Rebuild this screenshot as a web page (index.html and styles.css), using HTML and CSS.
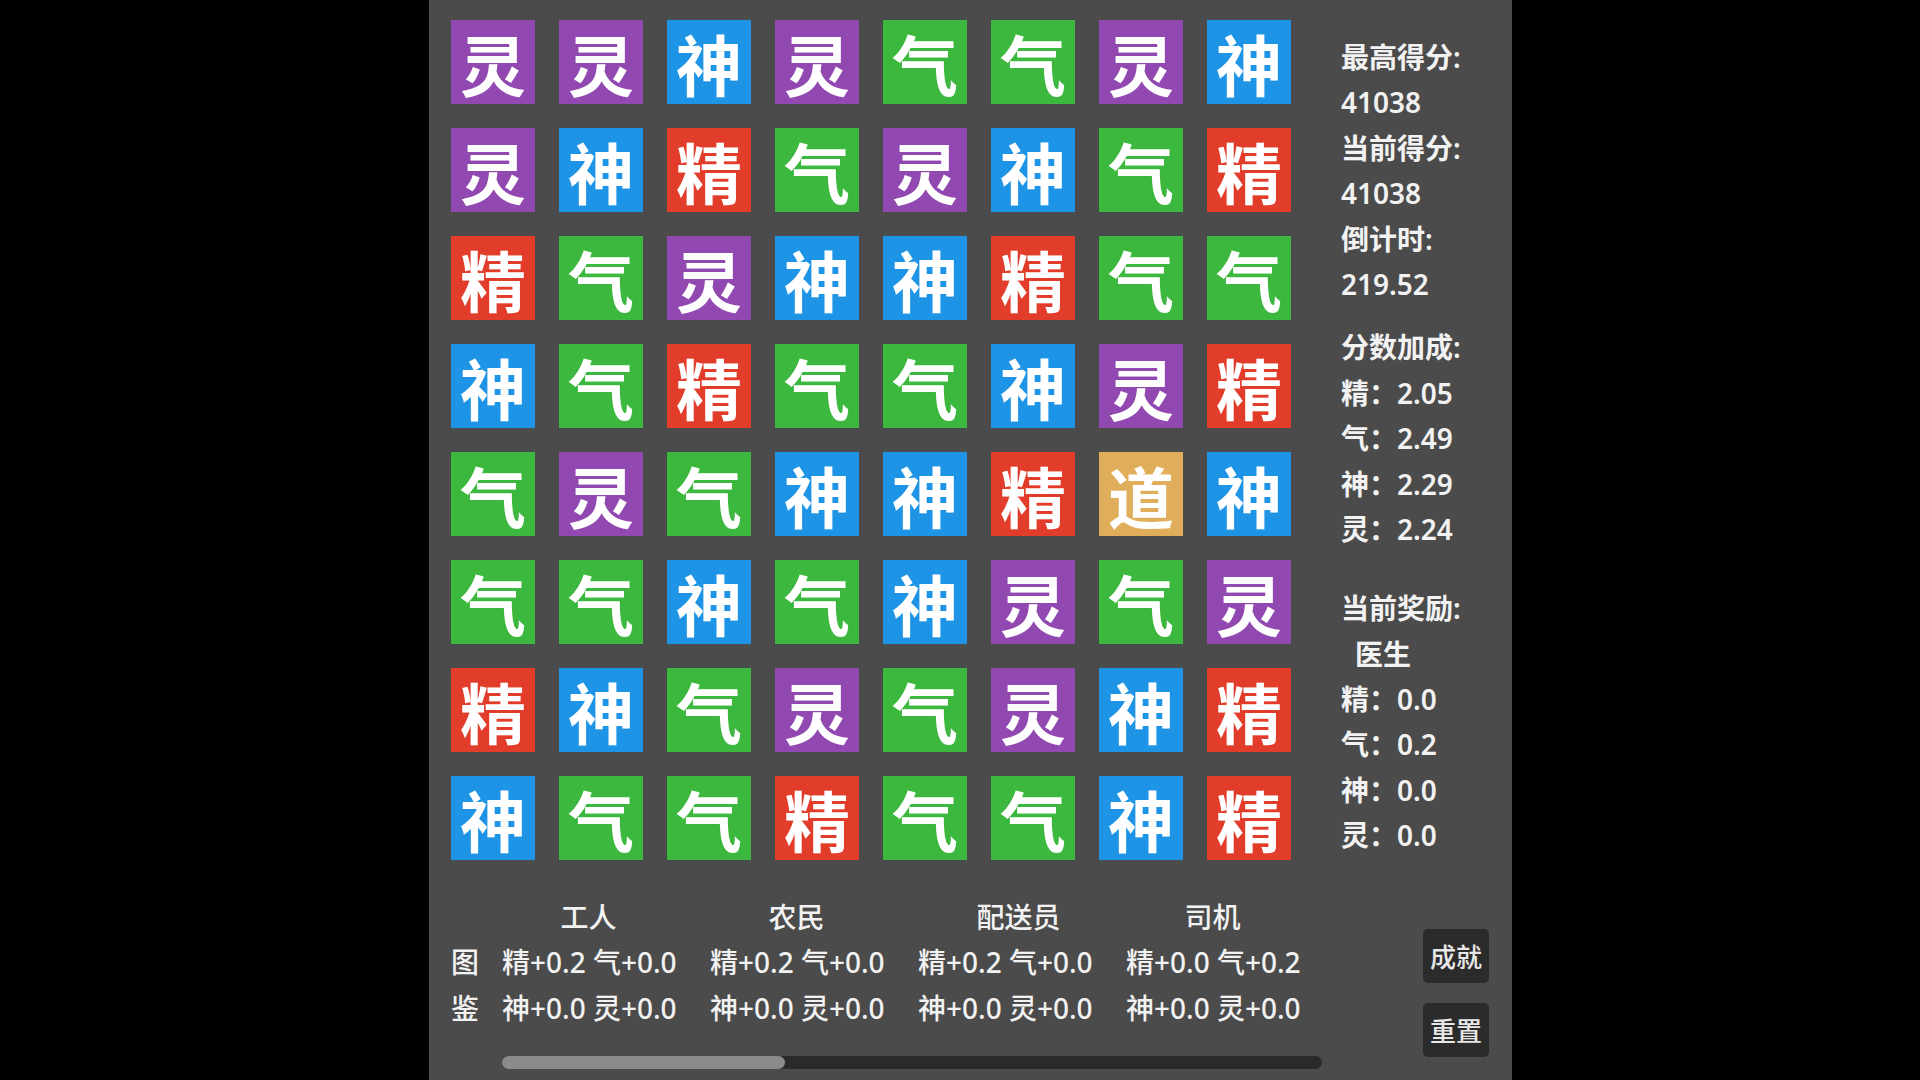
FILE: index.html
```html
<!DOCTYPE html>
<html lang="zh-CN">
<head>
<meta charset="utf-8">
<title>精气神灵</title>
<link rel="stylesheet" href="styles.css">
</head>
<body>
<div class="panel">
  <div class="top">
    <div class="board">
      <div class="tile ling">灵</div><div class="tile ling">灵</div><div class="tile shen">神</div><div class="tile ling">灵</div><div class="tile qi">气</div><div class="tile qi">气</div><div class="tile ling">灵</div><div class="tile shen">神</div>
      <div class="tile ling">灵</div><div class="tile shen">神</div><div class="tile jing">精</div><div class="tile qi">气</div><div class="tile ling">灵</div><div class="tile shen">神</div><div class="tile qi">气</div><div class="tile jing">精</div>
      <div class="tile jing">精</div><div class="tile qi">气</div><div class="tile ling">灵</div><div class="tile shen">神</div><div class="tile shen">神</div><div class="tile jing">精</div><div class="tile qi">气</div><div class="tile qi">气</div>
      <div class="tile shen">神</div><div class="tile qi">气</div><div class="tile jing">精</div><div class="tile qi">气</div><div class="tile qi">气</div><div class="tile shen">神</div><div class="tile ling">灵</div><div class="tile jing">精</div>
      <div class="tile qi">气</div><div class="tile ling">灵</div><div class="tile qi">气</div><div class="tile shen">神</div><div class="tile shen">神</div><div class="tile jing">精</div><div class="tile dao">道</div><div class="tile shen">神</div>
      <div class="tile qi">气</div><div class="tile qi">气</div><div class="tile shen">神</div><div class="tile qi">气</div><div class="tile shen">神</div><div class="tile ling">灵</div><div class="tile qi">气</div><div class="tile ling">灵</div>
      <div class="tile jing">精</div><div class="tile shen">神</div><div class="tile qi">气</div><div class="tile ling">灵</div><div class="tile qi">气</div><div class="tile ling">灵</div><div class="tile shen">神</div><div class="tile jing">精</div>
      <div class="tile shen">神</div><div class="tile qi">气</div><div class="tile qi">气</div><div class="tile jing">精</div><div class="tile qi">气</div><div class="tile qi">气</div><div class="tile shen">神</div><div class="tile jing">精</div>
    </div>
    <div class="side">
      <div class="group">
        <div class="line">最高得分:</div>
        <div class="line">41038</div>
        <div class="line">当前得分:</div>
        <div class="line">41038</div>
        <div class="line">倒计时:</div>
        <div class="line">219.52</div>
      </div>
      <div class="group g2">
        <div class="line">分数加成:</div>
        <div class="line">精：2.05</div>
        <div class="line">气：2.49</div>
        <div class="line">神：2.29</div>
        <div class="line">灵：2.24</div>
      </div>
      <div class="group g3">
        <div class="line">当前奖励:</div>
        <div class="line indent">医生</div>
        <div class="line">精：0.0</div>
        <div class="line">气：0.2</div>
        <div class="line">神：0.0</div>
        <div class="line">灵：0.0</div>
      </div>
    </div>
  </div>
  <div class="bottom">
    <div class="label">
      <div class="line">&nbsp;</div>
      <div class="line">图</div>
      <div class="line">鉴</div>
    </div>
    <div class="collection">
      <div class="cols">
        <div class="col">
          <div class="line">工人</div>
          <div class="line">精+0.2 气+0.0</div>
          <div class="line">神+0.0 灵+0.0</div>
        </div>
        <div class="col">
          <div class="line">农民</div>
          <div class="line">精+0.2 气+0.0</div>
          <div class="line">神+0.0 灵+0.0</div>
        </div>
        <div class="col">
          <div class="line shifted">配送员</div>
          <div class="line">精+0.2 气+0.0</div>
          <div class="line">神+0.0 灵+0.0</div>
        </div>
        <div class="col">
          <div class="line">司机</div>
          <div class="line">精+0.0 气+0.2</div>
          <div class="line">神+0.0 灵+0.0</div>
        </div>
      </div>
      <div class="track"><div class="thumb"></div></div>
    </div>
    <div class="buttons">
      <div class="btn">成就</div>
      <div class="btn">重置</div>
    </div>
  </div>
</div>
</body>
</html>
```
FILE: styles.css
```css
html, body {
  margin: 0;
  padding: 0;
  background: #000;
}
body {
  width: 1920px;
  height: 1080px;
  overflow: hidden;
  font-family: "Noto Sans", "Noto Sans CJK SC", sans-serif;
  color: #f2f2f2;
}
.panel {
  margin-left: 429px;
  width: 1083px;
  height: 1080px;
  background: #4b4b4b;
  box-sizing: border-box;
  padding-top: 20px;
}
.top {
  display: flex;
  padding-left: 22px;
}
.board {
  display: grid;
  grid-template-columns: repeat(8, 84px);
  grid-auto-rows: 84px;
  gap: 24px;
}
.tile {
  display: flex;
  align-items: center;
  justify-content: center;
  font-family: "Noto Sans CJK SC", sans-serif;
  font-size: 66px;
  font-weight: 700;
  color: #fff;
  line-height: 1;
}
.ling { background: #9148b0; }
.shen { background: #1e94e6; }
.jing { background: #e23c2a; }
.qi { background: #3db83e; }
.dao { background: #e0ae5b; }
.side {
  margin-left: 50px;
  padding-top: 15px;
  font-size: 28px;
  font-weight: 600;
}
.line {
  height: 45.4px;
  line-height: 45.4px;
  white-space: nowrap;
}
.g2 { margin-top: 18px; }
.g3 { margin-top: 34px; }
.indent { padding-left: 14px; }
.bottom {
  display: flex;
  margin-top: 35px;
  padding-left: 22px;
  font-size: 28px;
  font-weight: 500;
}
.label {
  width: 51px;
}
.collection {
  width: 820px;
  overflow: hidden;
}
.cols {
  display: flex;
  gap: 35px;
}
.col {
  width: 173px;
  flex: none;
  text-align: center;
}
.shifted { padding-left: 28px; }
.track {
  margin-top: 25px;
  height: 13px;
  border-radius: 7px;
  background: #2a2a2a;
}
.thumb {
  width: 283px;
  height: 13px;
  border-radius: 7px;
  background: #8b8b8b;
}
.buttons {
  margin-left: 101px;
  margin-top: 34px;
  display: flex;
  flex-direction: column;
  gap: 20px;
}
.btn {
  width: 66px;
  height: 54px;
  border-radius: 5px;
  background: #2b2b2b;
  color: #e8e8e8;
  display: flex;
  align-items: center;
  justify-content: center;
  font-size: 26px;
}
```
